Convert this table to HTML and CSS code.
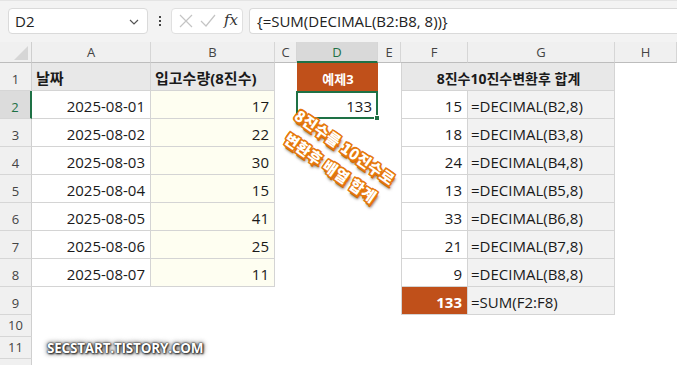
FILE: index.html
```html
<!DOCTYPE html>
<html lang="ko">
<head>
<meta charset="utf-8">
<link rel="stylesheet" href="styles.css">
</head>
<body>
<div class="app">
  <div class="toolbar">
    <div class="namebox"><span>D2</span>
      <svg class="chev" width="10" height="6" viewBox="0 0 10 6"><path d="M1 1 L5 5 L9 1" fill="none" stroke="#555" stroke-width="1.2"/></svg>
    </div>
    <div class="dots"><i></i><i></i><i></i></div>
    <div class="fbtns">
      <svg width="14" height="14" viewBox="0 0 14 14"><path d="M1 1 L13 13 M13 1 L1 13" stroke="#c4c4c4" stroke-width="1.2"/></svg>
      <svg width="16" height="14" viewBox="0 0 16 14"><path d="M1 7 L6 12 L15 1" fill="none" stroke="#c4c4c4" stroke-width="1.2"/></svg>
      <span class="fx">fx</span>
    </div>
    <div class="formula">{=SUM(DECIMAL(B2:B8, 8))}</div>
  </div>
  <div class="sheet">
    <div class="corner"><svg width="14" height="14" viewBox="0 0 14 14"><path d="M14 0 L14 14 L0 14 Z" fill="#d6d6d6"/></svg></div>
    <div class="ch">A</div><div class="ch">B</div><div class="ch">C</div><div class="ch sel">D</div><div class="ch">E</div><div class="ch">F</div><div class="ch">G</div><div class="ch">H</div>

    <div class="rh">1</div>
    <div class="c th">날짜</div><div class="c th">입고수량(8진수)</div><div class="c"></div>
    <div class="c orange ex">예제3</div><div class="c"></div>
    <div class="c th span2 lft">8진수10진수변환후 합계</div><div class="c"></div>

    <div class="rh rsel">2</div>
    <div class="c td r">2025-08-01</div><div class="c td r y">17</div><div class="c"></div>
    <div class="c active r">133<span class="handle"></span></div><div class="c"></div>
    <div class="c td r lft">15</div><div class="c td g">=DECIMAL(B2,8)</div><div class="c"></div>

    <div class="rh">3</div>
    <div class="c td r">2025-08-02</div><div class="c td r y">22</div><div class="c"></div><div class="c"></div><div class="c"></div>
    <div class="c td r lft">18</div><div class="c td g">=DECIMAL(B3,8)</div><div class="c"></div>

    <div class="rh">4</div>
    <div class="c td r">2025-08-03</div><div class="c td r y">30</div><div class="c"></div><div class="c"></div><div class="c"></div>
    <div class="c td r lft">24</div><div class="c td g">=DECIMAL(B4,8)</div><div class="c"></div>

    <div class="rh">5</div>
    <div class="c td r">2025-08-04</div><div class="c td r y">15</div><div class="c"></div><div class="c"></div><div class="c"></div>
    <div class="c td r lft">13</div><div class="c td g">=DECIMAL(B5,8)</div><div class="c"></div>

    <div class="rh">6</div>
    <div class="c td r">2025-08-05</div><div class="c td r y">41</div><div class="c"></div><div class="c"></div><div class="c"></div>
    <div class="c td r lft">33</div><div class="c td g">=DECIMAL(B6,8)</div><div class="c"></div>

    <div class="rh">7</div>
    <div class="c td r">2025-08-06</div><div class="c td r y">25</div><div class="c"></div><div class="c"></div><div class="c"></div>
    <div class="c td r lft">21</div><div class="c td g">=DECIMAL(B7,8)</div><div class="c"></div>

    <div class="rh">8</div>
    <div class="c td r">2025-08-07</div><div class="c td r y">11</div><div class="c"></div><div class="c"></div><div class="c"></div>
    <div class="c td r lft">9</div><div class="c td g">=DECIMAL(B8,8)</div><div class="c"></div>

    <div class="rh">9</div>
    <div class="c"></div><div class="c"></div><div class="c"></div><div class="c"></div><div class="c"></div>
    <div class="c td r lft orange total">133</div><div class="c td g">=SUM(F2:F8)</div><div class="c"></div>

    <div class="rh">10</div>
    <div class="c"></div><div class="c"></div><div class="c"></div><div class="c"></div><div class="c"></div><div class="c"></div><div class="c"></div><div class="c"></div>
    <div class="rh">11</div>
    <div class="c"></div><div class="c"></div><div class="c"></div><div class="c"></div><div class="c"></div><div class="c"></div><div class="c"></div><div class="c"></div>
    <div class="rh"></div>
  </div>
  <div class="note">8진수를 10진수로<br>변환후 배열 합계</div>
  <div class="mark">SECSTART.TISTORY.COM</div>
</div>
</body>
</html>
```

FILE: styles.css
```css
* { box-sizing: border-box; }
html, body { margin: 0; padding: 0; background: #fff; }
body { width: 677px; height: 365px; overflow: hidden; font-family: "Open Sans", "Noto Sans CJK KR", sans-serif; color: #1a1a1a; }
.app { position: relative; width: 677px; height: 365px; overflow: hidden; }

.toolbar { height: 42px; background: #f3f3f3; border-top: 1px solid #e4e4e4; display: flex; align-items: flex-start; padding: 7px 0 0 8px; }
.namebox { width: 140px; height: 26px; background: #fff; border: 1px solid #dadada; border-radius: 4px; display: flex; align-items: center; justify-content: space-between; padding: 0 8px 0 6px; font-size: 15px; color: #222; }
.namebox .chev { margin-top: 2px; }
.dots { width: 23px; height: 26px; display: flex; flex-direction: column; align-items: center; justify-content: center; gap: 2px; }
.dots i { display: block; width: 2px; height: 2px; background: #444; }
.fbtns { width: 72px; height: 26px; background: #fff; border: 1px solid #e0e0e0; border-radius: 4px; display: flex; align-items: center; justify-content: space-between; padding: 0 4px 0 7px; }
.fx { font-family: "DejaVu Serif", "Liberation Serif", serif; font-style: italic; font-size: 15px; color: #333; margin-bottom: 2px; }
.formula { flex: 1; margin-left: 6px; height: 26px; background: #fff; border: 1px solid #dadada; border-right: none; border-radius: 4px 0 0 4px; padding: 1px 0 0 7px; font-size: 15px; line-height: 22px; color: #222; }

.sheet { display: grid; grid-template-columns: 32px 119px 124px 22px 81px 23px 67px 147px 62px; grid-template-rows: 21px repeat(9, 28px) 22px 22px 22px; }
.corner { background: #f0f0f0; border-right: 1px solid #cfcfcf; border-bottom: 1px solid #bdbdbd; display: flex; align-items: flex-end; justify-content: flex-end; padding: 0 3px 2px 0; }
.ch { background: #f0f0f0; border-right: 1px solid #d6d6d6; border-bottom: 1px solid #bdbdbd; font-size: 13px; color: #444; text-align: center; line-height: 20px; }
.ch.sel { background: #d9d9d9; border-bottom: 2px solid #1e7145; color: #1e7145; }
.rh { background: #f0f0f0; border-right: 1px solid #cfcfcf; border-bottom: 1px solid #d6d6d6; font-size: 13px; color: #444; text-align: center; display: flex; align-items: flex-end; justify-content: center; padding-bottom: 2px; }
.rh.rsel { background: #dcdcdc; border-right: 2px solid #1e7145; color: #1e7145; }

.c { font-size: 15px; display: flex; align-items: center; padding: 2px 3px 0 4px; white-space: nowrap; position: relative; }
.td, .th { border-right: 1px solid #d4d4d4; border-bottom: 1px solid #d4d4d4; }
.th { background: #e8e8e8; font-weight: 700; font-size: 15px; }
.r { justify-content: flex-end; padding-right: 5px; }
.y { background: #fefef1; }
.g { background: #f2f2f2; padding-left: 3px; }
.lft { border-left: 1px solid #d4d4d4; }
.span2 { grid-column: span 2; justify-content: center; font-size: 14px; }
.orange { background: #c0501a; color: #fff; font-weight: 700; }
.ex { justify-content: center; font-size: 13px; }
.total { font-size: 15px; }
.active { border: 2px solid #1e7145; margin-left: -1px; padding-right: 4px; }
.handle { position: absolute; right: -4px; bottom: -4px; width: 6px; height: 6px; background: #1e7145; border: 1px solid #fff; }

.note { position: absolute; left: 251px; top: 132px; width: 174px; text-align: center; font-weight: 900; font-size: 15px; line-height: 25px; letter-spacing: 0.3px; color: #fff; transform: rotate(35deg); font-family: "Noto Sans CJK KR", sans-serif;
  text-shadow: 1.5px 0 0 #e6780c, -1.5px 0 0 #e6780c, 0 1.5px 0 #e6780c, 0 -1.5px 0 #e6780c, 1.5px 1.5px 0 #e6780c, -1.5px -1.5px 0 #e6780c, 1.5px -1.5px 0 #e6780c, -1.5px 1.5px 0 #e6780c, 2.5px 2.5px 0 #d96a08, 3px 3px 3px rgba(50,25,0,0.75); }
.mark { position: absolute; left: 47px; top: 339px; font-family: "Open Sans", sans-serif; font-weight: 700; font-size: 13.5px; letter-spacing: -0.2px; color: #fff;
  text-shadow: 0 0 1px #222, 0 0 2px #333, 1px 1px 2px #222, 0 0 4px #555, 0 0 6px #888; }
```
